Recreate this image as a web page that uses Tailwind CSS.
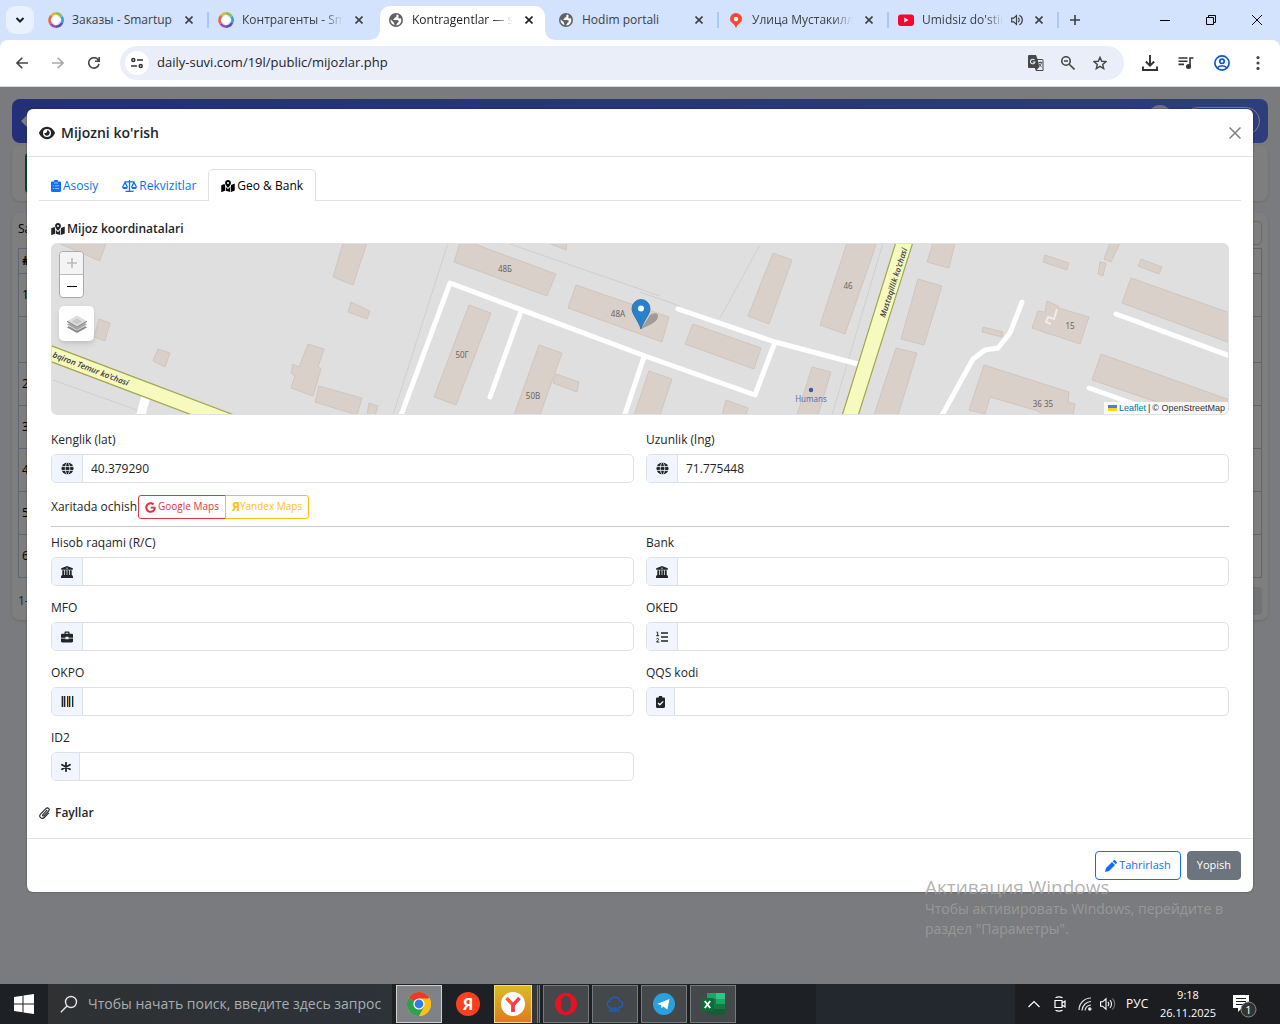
<!DOCTYPE html>
<html lang="uz">
<head>
    <meta charset="UTF-8">
    <meta name="viewport" content="width=device-width, initial-scale=1.0" />
    <script src="https://cdn.jsdelivr.net/npm/@tailwindcss/browser@4"></script>
    <title>Kontragentlar</title>
</head>
<body class="min-h-screen flex flex-col font-['Open_Sans','Noto_Sans',sans-serif] text-xs text-[#212529] bg-[#d3e3fd]">

<!-- shared icons -->
<svg class="hidden">
    <symbol id="x" viewBox="0 0 8 8"><path d="M.5.5l7 7M7.5.5l-7 7" stroke="currentColor" stroke-width="1.6" fill="none"/></symbol>
    <symbol id="smartup" viewBox="0 0 16 16">
        <g fill="none" stroke-width="2.6">
            <path d="M3.2 3.8A6.6 6.6 0 0 1 8 1.4" stroke="#e9b23c"/>
            <path d="M8 1.4a6.6 6.6 0 0 1 5.6 3.2" stroke="#8cc152"/>
            <path d="M13.6 4.6a6.6 6.6 0 0 1 .4 6.2" stroke="#3a9ad9"/>
            <path d="M14 10.8a6.6 6.6 0 0 1-6 3.8" stroke="#5b4fb5"/>
            <path d="M8 14.6a6.6 6.6 0 0 1-5.4-3" stroke="#a54bb0"/>
            <path d="M2.6 11.6a6.6 6.6 0 0 1 .6-7.8" stroke="#e8663f"/>
        </g>
        <path d="M8 2.4l5.400 5.400L8 13.400 2.600 8z" fill="#fff"/>
    </symbol>
    <symbol id="earth" viewBox="0 0 16 16">
        <circle cx="8" cy="8" r="7" fill="#5f6368"/>
        <path d="M9.600 2.400C8.400 2.600 8 3.500 8.400 4.200c.3.600-.6 1-1.300 1.200-.8.300-.5 1.300-1.300 1.500-.7.200-.4 1-.1 1.200h3.600c1 0 1.600.8 1.400 1.600-.2.700-1.200.600-1.400 1.400-.2.900-.7 1.700-1.700 2.100 3.400.600 5.700-2.200 5.700-5 0-.9-.2-1.600-.5-2.200-.7.700-1.700.700-2.200.1-.6-.7.1-1.700 0-2.400-.1-.6-.5-1.100-1-1.300z" fill="#fff"/>
        <path d="M2.500 7.600l3 2.400c.5.400.2 1 .6 1.500.4.400.600 1 .3 1.600C4 12.500 2.200 10.200 2.500 7.600z" fill="#fff"/>
    </symbol>
    <symbol id="map-pin" viewBox="0 0 576 512">
        <path fill="currentColor" d="M288 0c-70 0-126 56-126 126 0 56 82 158 113 194 7 8 19 8 26 0 31-36 113-138 113-194C414 56 358 0 288 0zm0 168a42 42 0 1 1 0-84 42 42 0 0 1 0 84zM20 216A32 32 0 0 0 0 246v250c0 11 11 19 22 15l138-57V214c-9-16-16-32-21-47L20 216zm268 160c-14 0-27-6-36-17-20-23-41-50-60-77v172l192 58V282c-19 27-40 54-60 77-9 11-22 17-36 17zm266-215l-138 57v294l140-56a32 32 0 0 0 20-30V176c0-11-11-19-22-15z"/>
    </symbol>
    <symbol id="globe" viewBox="0 0 14 14">
        <circle cx="7" cy="7" r="6.500" fill="currentColor"/>
        <g fill="none" stroke="#f1f5ff" stroke-width=".9"><path d="M0 4.900h14M0 9.100h14M7 0C3.800 3.500 3.800 10.500 7 14M7 0c3.200 3.500 3.200 10.500 0 14"/></g>
    </symbol>
    <symbol id="bank" viewBox="0 0 512 512">
        <path fill="currentColor" d="M256 0l248 100v60H8v-60zM56 180h80v200h32V180h72v200h32V180h72v200h32V180h80v200l48 40v24H8v-24l48-40zM0 450h512v62H0z"/>
        <circle cx="256" cy="92" r="30" fill="#f1f5ff"/>
    </symbol>
</svg>

<!-- tab strip -->
<header class="h-10 flex items-center pl-1.5 text-[#3c4043]">
    <button aria-label="Tabs" class="size-7 mr-1.5 rounded-[9px] bg-[#e9f0fe] flex items-center justify-center">
        <svg class="w-2.5 h-2" viewBox="0 0 10 8" fill="none" stroke="#1f1f1f" stroke-width="2"><path d="M1.500 2L5 5.500 8.500 2"/></svg>
    </button>
    <div class="w-[170px] flex items-center gap-2 pl-2 pr-px">
        <svg class="size-4 shrink-0"><use href="#smartup"/></svg>
        <span class="flex-1 overflow-hidden whitespace-nowrap">Заказы - Smartup</span>
        <button aria-label="Close" class="p-1 mr-0.5"><svg class="size-2"><use href="#x"/></svg></button>
        <i class="w-0.5 h-4 bg-[#a8c7fa]"></i>
    </div>
    <div class="w-[170px] flex items-center gap-2 pl-2 pr-px">
        <svg class="size-4 shrink-0"><use href="#smartup"/></svg>
        <span class="flex-1 overflow-hidden whitespace-nowrap [mask-image:linear-gradient(to_right,black_80%,transparent)]">Контрагенты - Smartup</span>
        <button aria-label="Close" class="p-1 mr-0.5"><svg class="size-2"><use href="#x"/></svg></button>
        <i class="w-0.5 h-4"></i>
    </div>
    <div class="w-[170px] h-full pt-1.5">
        <div class="relative w-[165px] h-full flex items-center gap-2 pl-2 pr-2 pb-1.5 bg-white rounded-t-[10px] text-[#1f1f1f]">
            <svg class="absolute -left-2.5 bottom-0 size-2.5" viewBox="0 0 10 10"><path d="M10 0v10H0A10 10 0 0 0 10 0z" fill="#fff"/></svg>
            <svg class="absolute -right-2.5 bottom-0 size-2.5" viewBox="0 0 10 10"><path d="M0 0v10h10A10 10 0 0 1 0 0z" fill="#fff"/></svg>
            <svg class="size-4 shrink-0"><use href="#earth"/></svg>
            <span class="flex-1 overflow-hidden whitespace-nowrap [mask-image:linear-gradient(to_right,black_80%,transparent)]">Kontragentlar — stol</span>
            <button aria-label="Close" class="p-1"><svg class="size-2"><use href="#x"/></svg></button>
        </div>
    </div>
    <div class="w-[170px] flex items-center gap-2 pl-2 pr-px">
        <svg class="size-4 shrink-0"><use href="#earth"/></svg>
        <span class="flex-1 overflow-hidden whitespace-nowrap">Hodim portali</span>
        <button aria-label="Close" class="p-1 mr-0.5"><svg class="size-2"><use href="#x"/></svg></button>
        <i class="w-0.5 h-4 bg-[#a8c7fa]"></i>
    </div>
    <div class="w-[170px] flex items-center gap-2 pl-2 pr-px">
        <svg class="size-4 shrink-0" viewBox="0 0 16 16"><path d="M8 1a6 6 0 0 0-6 6c0 4 4.800 4.300 5.500 8.500h1C9.200 11.300 14 11 14 7a6 6 0 0 0-6-6z" fill="#f43"/><circle cx="8" cy="7" r="2.200" fill="#fff"/></svg>
        <span class="flex-1 overflow-hidden whitespace-nowrap [mask-image:linear-gradient(to_right,black_80%,transparent)]">Улица Мустакиллик</span>
        <button aria-label="Close" class="p-1 mr-0.5"><svg class="size-2"><use href="#x"/></svg></button>
        <i class="w-0.5 h-4 bg-[#a8c7fa]"></i>
    </div>
    <div class="w-[170px] flex items-center gap-2 pl-2 pr-px">
        <svg class="size-4 shrink-0" viewBox="0 0 16 16"><rect y="2.500" width="16" height="11.500" rx="3" fill="#f03"/><path d="M6.200 5.600v5L10.600 8z" fill="#fff"/></svg>
        <span class="flex-1 overflow-hidden whitespace-nowrap [mask-image:linear-gradient(to_right,black_80%,transparent)]">Umidsiz do'stim</span>
        <svg class="w-3 h-3 shrink-0" viewBox="0 0 12 12" fill="none" stroke="#3c4043" stroke-width="1.200"><path d="M.7 4.200h2L5.500 1.600v8.800L2.700 7.800h-2zM7.300 3.800c1.200 1 1.200 3.400 0 4.400M8.300 1.200c4 1.800 4 7.800 0 9.600"/></svg>
        <button aria-label="Close" class="p-1 mr-0.5"><svg class="size-2"><use href="#x"/></svg></button>
        <i class="w-0.5 h-4 bg-[#a8c7fa]"></i>
    </div>
    <button aria-label="New tab" class="p-2.5"><svg class="size-2.5" viewBox="0 0 10 10" stroke="#3c4043" stroke-width="1.600"><path d="M5 0v10M0 5h10"/></svg></button>
    <div class="ml-auto flex text-black">
        <button aria-label="Minimize" class="w-[46px] h-10 flex items-center justify-center"><svg class="size-2.5" viewBox="0 0 10 10"><path d="M0 5h10v1H0z"/></svg></button>
        <button aria-label="Restore" class="w-[46px] h-10 flex items-center justify-center"><svg class="size-2.5" viewBox="0 0 10 10" fill="none" stroke="#000"><path d="M.5 2.500h7v7h-7zM2.500 2.500v-2h7v7h-2"/></svg></button>
        <button aria-label="Close window" class="w-[46px] h-10 flex items-center justify-center"><svg class="size-2.5" viewBox="0 0 10 10" stroke="#000"><path d="M0 0l10 10M10 0L0 10"/></svg></button>
    </div>
</header>

<!-- toolbar -->
<nav class="h-[47px] flex items-center px-1 bg-white rounded-t-lg border-b border-[#d5d7db] text-[#474747]">
    <button aria-label="Back" class="w-9 flex justify-center"><svg class="size-3" viewBox="0 0 12 12" fill="none" stroke="currentColor" stroke-width="1.600"><path d="M12 6H1M6.300.7L1 6l5.300 5.300"/></svg></button>
    <button aria-label="Forward" class="w-9 flex justify-center text-[#a8a8a8]"><svg class="size-3" viewBox="0 0 12 12" fill="none" stroke="currentColor" stroke-width="1.600"><path d="M0 6h11M5.700.7L11 6l-5.300 5.300"/></svg></button>
    <button aria-label="Reload" class="w-9 flex justify-center"><svg class="size-3" viewBox="0 0 12 12" fill="none" stroke="currentColor" stroke-width="1.600"><path d="M11 7A5.200 5.200 0 1 1 9.700 2.300L11 4M11.200 0v4.300H7"/></svg></button>
    <div class="flex-1 h-[34px] ml-2 mr-2 pl-[5px] pr-2 flex items-center rounded-full bg-[#e9eef9]">
        <span class="size-6 mr-2 rounded-full bg-white flex items-center justify-center">
            <svg class="size-3" viewBox="0 0 12 12" fill="none" stroke="#333" stroke-width="1.500"><circle cx="2.300" cy="3" r="1.500"/><path d="M6 3h6M0 9h6"/><circle cx="9.700" cy="9" r="1.500"/></svg>
        </span>
        <input aria-label="Address" class="flex-1 text-[13px] text-[#1f1f1f] outline-none" value="daily-suvi.com/19l/public/mijozlar.php">
        <button aria-label="Translate" class="w-8 flex justify-center">
            <svg class="size-4" viewBox="0 0 16 16"><path d="M1 0h7l1.500 4H14a1.500 1.500 0 0 1 1.500 1.500V15a1 1 0 0 1-1 1H8l-1.200-3H1a1 1 0 0 1-1-1V1a1 1 0 0 1 1-1z" fill="#474747"/><path d="M9.800 5h4.700v10H8.800l2.400-3z" fill="#e9eef9"/><path d="M6.500 5A2.300 2.300 0 1 0 7 7H4.800" fill="none" stroke="#e9eef9" stroke-width="1.100"/><path d="M10.300 7.500h4M12.300 6.500v1M13.500 7.500c-.5 2-1.500 3.500-3 4.500M11 8.500c.5 1.500 1.500 2.700 2.800 3.500" fill="none" stroke="#474747" stroke-width=".9"/></svg>
        </button>
        <button aria-label="Zoom" class="w-8 flex justify-center"><svg class="size-3.5" viewBox="0 0 14 14" fill="none" stroke="#474747" stroke-width="1.600"><circle cx="5" cy="5" r="4.200"/><path d="M8.200 8.200l5.300 5.300M3 5h4"/></svg></button>
        <button aria-label="Bookmark" class="w-8 flex justify-center"><svg class="size-3.5" viewBox="0 0 14 14" fill="none" stroke="#474747" stroke-width="1.400"><path d="M7 1.300l1.700 4 4.300.3-3.300 2.800 1 4.200L7 10.300l-3.700 2.300 1-4.200L1 5.600l4.300-.3z"/></svg></button>
    </div>
    <button aria-label="Downloads" class="w-9 flex justify-center"><svg class="size-4" viewBox="0 0 16 16" fill="none" stroke="#333" stroke-width="1.900"><path d="M8 0v10.500M3.800 6.500L8 10.700l4.200-4.200M1 11.500V15h14v-3.500"/></svg></button>
    <button aria-label="Media" class="w-9 flex justify-center"><svg class="size-4" viewBox="0 0 16 16" fill="none" stroke="#333" stroke-width="1.600"><path d="M.5 3h9M.5 6.200h9M.5 9.400h5.500M12 11.500V3h3.500"/><circle cx="10.500" cy="11.500" r="1.700" fill="#333"/></svg></button>
    <button aria-label="Profile" class="w-9 flex justify-center"><svg class="size-4" viewBox="0 0 16 16" fill="none" stroke="#0b57d0" stroke-width="1.700"><circle cx="8" cy="8" r="7.100"/><circle cx="8" cy="6.300" r="2.200"/><path d="M3 13c2.500-3 7.500-3 10 0"/></svg></button>
    <button aria-label="Menu" class="w-9 flex justify-center"><svg class="w-1 h-3.5" viewBox="0 0 4 14" fill="#474747"><circle cx="2" cy="1.600" r="1.600"/><circle cx="2" cy="7" r="1.600"/><circle cx="2" cy="12.400" r="1.600"/></svg></button>
</nav>

<main class="relative flex-1 bg-[#f5f6fc]">
    <!-- page under the modal -->
    <div class="p-3">
        <div class="h-11 mb-0.5 px-2 flex items-center rounded-lg bg-linear-to-r from-[#4660f0] to-[#5c7af8]">
            <svg class="size-4" viewBox="0 0 16 16" fill="#fff"><path d="M8 1v4h7v6H8v4L1 8z"/></svg>
            <span class="w-6 h-8 ml-auto rounded-full bg-white/80"></span>
            <span class="w-[76px] h-7 ml-3 rounded-full border border-white"></span>
        </div>
        <div class="h-14 mb-3 p-2 pl-[13px] rounded-lg bg-white/70 shadow-sm"><div class="w-20 h-10 rounded-sm bg-[#198754]"></div></div>
        <div class="p-1.5 pt-2 rounded-lg bg-white/70 shadow-sm text-black">
            <div class="h-[27px] flex items-start justify-between">Saralash<span class="w-40 h-6 border border-gray-300 rounded-sm"></span></div>
            <table class="w-full border border-[#bccbe8]">
                <tr class="h-[25px] border-b border-[#bccbe8]"><th class="px-[3px] text-left">#</th></tr>
                <tr class="h-[43px] border-b border-[#bccbe8]"><td class="px-[3px]">1</td></tr>
                <tr class="h-[46px] border-b border-[#bccbe8]"><td></td></tr>
                <tr class="h-[43px] border-b border-[#bccbe8]"><td class="px-[3px]">2</td></tr>
                <tr class="h-[43px] border-b border-[#bccbe8]"><td class="px-[3px]">3</td></tr>
                <tr class="h-[43px] border-b border-[#bccbe8]"><td class="px-[3px]">4</td></tr>
                <tr class="h-[43px] border-b border-[#bccbe8]"><td class="px-[3px]">5</td></tr>
                <tr class="h-[43px] border-b border-[#bccbe8]"><td class="px-[3px]">6</td></tr>
            </table>
            <div class="pt-2.5 h-9 flex items-center justify-between"><span class="text-[#2a4a9a]">1-6</span><span class="w-10 h-7 bg-gray-200 rounded-sm"></span></div>
        </div>
    </div>

    <!-- modal -->
    <div class="absolute inset-0 bg-black/50 px-[27px] pt-[22px]">
        <div role="dialog" aria-labelledby="title" class="bg-white rounded-md shadow-[0_0_2px_#0006]">
            <div class="h-12 px-3 flex items-center gap-1.5 border-b border-[#dee2e6]">
                <svg class="w-4 h-4" viewBox="0 0 576 512" fill="currentColor"><path d="M288 32c-80.800 0-145.500 36.800-192.600 80.600C48.600 156 17.300 208 2.500 243.700c-3.300 7.900-3.300 16.700 0 24.600C17.300 304 48.600 356 95.400 399.400C142.500 443.200 207.200 480 288 480s145.500-36.800 192.600-80.600c46.800-43.500 78.100-95.400 93-131.100c3.300-7.900 3.300-16.700 0-24.600c-14.900-35.700-46.200-87.700-93-131.100C433.500 68.800 368.800 32 288 32zM144 256a144 144 0 1 1 288 0 144 144 0 1 1 -288 0zm144-64c0 35.300-28.700 64-64 64c-7.100 0-13.900-1.200-20.300-3.300c-5.500-1.800-11.900 1.600-11.700 7.400c.3 6.900 1.300 13.800 3.200 20.700c13.700 51.200 66.400 81.600 117.600 67.900s81.600-66.400 67.900-117.600c-11.100-41.500-47.800-69.400-88.600-71.100c-5.800-.2-9.200 6.100-7.400 11.700c2.100 6.400 3.300 13.200 3.300 20.300z"/></svg>
                <h5 id="title" class="text-sm font-semibold">Mijozni ko'rish</h5>
                <button aria-label="Close" class="ml-auto text-[#7f7f7f]"><svg class="size-3" viewBox="0 0 12 12" stroke="currentColor" stroke-width="1.500"><path d="M.5.5l11 11M11.500.5l-11 11"/></svg></button>
            </div>

            <div class="px-3 pt-3 pb-[15px]">
                <div role="tablist" class="flex h-8 border-b border-[#dee2e6] text-[#0d6efd]">
                    <button role="tab" class="h-8 px-3 pt-px flex items-center gap-0.5">
                        <svg class="w-2.5 h-3" viewBox="0 0 10 12"><path d="M1.200 1.400H3a2 2 0 0 1 4 0h1.800c.7 0 1.200.5 1.200 1.200v8.200c0 .7-.5 1.200-1.200 1.200H1.200C.5 12 0 11.500 0 10.800V2.600c0-.7.5-1.200 1.200-1.200z" fill="currentColor"/><path d="M3 3h4M3.800 5.800h4.400M3.800 8.600h4.400M1.800 5.800h1M1.800 8.600h1" stroke="#fff" stroke-width=".6"/></svg>
                        Asosiy
                    </button>
                    <button role="tab" class="h-8 px-3 pt-px flex items-center gap-0.5">
                        <svg class="w-[15px] h-3" viewBox="0 0 15 12" fill="none" stroke="currentColor" stroke-width="1.300"><path d="M2.500 1.900h10M7.500 0v11M3.500 11.300h8M.6 7L3 2.500 5.400 7M9.600 7L12 2.500 14.400 7"/><path d="M.2 7h5.600a2.800 2 0 0 1-5.600 0zM9.200 7h5.600a2.800 2 0 0 1-5.600 0z" fill="currentColor" stroke="none"/></svg>
                        Rekvizitlar
                    </button>
                    <button role="tab" aria-selected="true" class="h-8 px-3 flex items-center gap-0.5 text-black bg-white border border-b-0 border-[#dee2e6] rounded-t-[5px]">
                        <svg class="w-3.5 h-3"><use href="#map-pin"/></svg>
                        Geo &amp; Bank
                    </button>
                </div>

                <div class="px-3 pt-[18px]">
                    <h6 class="flex items-center gap-0.5 leading-5 font-semibold mb-1"><svg class="w-3.5 h-3"><use href="#map-pin"/></svg>Mijoz koordinatalari</h6>

                    <!-- map -->
                    <div class="relative h-[172px] mb-[15px] border border-[#dee2e6] rounded-md overflow-hidden bg-[#dfdfdf]">
                        <svg class="w-full h-full" viewBox="52 244 1176 170" preserveAspectRatio="xMidYMid slice">
                            <g fill="none" stroke="#cfcfcf">
                                <path d="M448 243L393 415M507 243l153 53M760 245l-40 73M883 243l-51 172M640 292l40 14M53 380l84 30"/>
                            </g>
                            <g fill="#d9d0c9" stroke="#cfc0b5" stroke-width=".8">
                                <path d="M58 243h48l-6 18zM99 319l11 4-5 18-11-4zM158 349l12 4-5 14-12-6z"/>
                                <path d="M308 344l16 5-6 18 3 2-8 27-22-8 4-12-4-3 2-9 6 3zM319 386l43 12-5 17-42-13zM369 403l9 3-3 9h-8z"/>
                                <path d="M343 243h24l-14 42-20-8zM351 302l19 9-3 8-19-7z"/>
                                <path d="M460 243h12l84 31-9 22-93-34zM548 243h19l-1 7zM576 285l93 32-7 25-94-34z"/>
                                <path d="M469 305l22 8-35 92-22-8zM539 345l23 8-22 62h-26zM556 374l23 8-2 10-24-9z"/>
                                <path d="M773 253l19 7-23 64-21-8zM847 243h25l4 2-31 89-25-9zM933 243h22l-6 25-22-6zM918 279l24 7-18 59-23-6zM896 348l21 5-19 62h-24z"/>
                                <path d="M693 324l68 24-7 21-69-25zM649 371l23 8-12 36h-26zM726 400l22 8-2 7h-24zM812 367l19 5-13 43h-21z"/>
                                <path d="M1045 255l24 8-2 7-24-8zM1110 243h10l-9 19-7-3zM1100 262l6 1-3 13-5-2zM1141 259l21 8-3 7-21-8z"/>
                                <path d="M1131 278l99 35v30l-108-40zM1101 354l129 46v20h-20l-118-40zM983 327l20 5-1 5-20-5z"/>
                                <path d="M1059 308l30 9-9 27-27-9-4-1-17-6 6-17 7 1 2-11 11 5z"/>
                                <path d="M984 365l85 27-1 10 7 2-2 11h-31l-4-4-48-14-5 17-16-4z"/>
                            </g>
                            <path d="M1057 309l-3 10-6-2-2 5 5 2" fill="none" stroke="#ececec" stroke-width="2"/>
                            <g fill="none" stroke="#fff" stroke-width="5" stroke-linecap="round" stroke-linejoin="round">
                                <path d="M400 418L450 283l195 73 110 39 20-53M521 311l-31 86M644 357l-20 60M678 309l97 33 83 22"/>
                                <path d="M1022 302l-12 31-12 15-13 2-12 9-32 58M1116 314l114 42M1089 388l45 16"/>
                                <path d="M146 396l-6 22" stroke-width="9" stroke-linecap="butt"/>
                            </g>
                            <g fill="#f7fabf" stroke="#a3a650" stroke-width="1.200">
                                <path d="M48 344.500l190 72h-42L48 360.500z"/>
                                <path d="M896 242h17l-55 174h-16z"/>
                            </g>
                            <g class="font-['Noto_Sans']" font-size="8" fill="#666" text-anchor="middle">
                                <text x="505" y="272">48Б</text><text x="618" y="317">48А</text><text x="462" y="358">50Г</text>
                                <text x="533" y="399">50В</text><text x="848" y="289">46</text><text x="1070" y="329">15</text><text x="1043" y="407">36 35</text>
                                <text x="811" y="402" fill="#5a74b0">Humans</text>
                            </g>
                            <g class="font-['Noto_Sans']" font-size="8" font-weight="600" font-style="italic" fill="#444">
                                <text transform="translate(52 357) rotate(21)">bqiron Temur ko'chasi</text>
                                <text transform="translate(885 318) rotate(-72)">Mustaqillik ko'chasi</text>
                            </g>
                            <circle cx="811" cy="390" r="2.200" fill="#3558a8"/>
                            <!-- marker -->
                            <path d="M641 329l9-14c4-3 9-2 8 2-1 5-8 8-17 12z" fill="#000" opacity=".25"/>
                            <path d="M641 299.500a9 9 0 0 0-9 9c0 6 6 11 9 20.500 3-9.500 9-14.500 9-20.500a9 9 0 0 0-9-9z" fill="#2a81cb" stroke="#2569a5" stroke-width=".8"/>
                            <circle cx="641" cy="308.500" r="3" fill="#fff"/>
                        </svg>
                        <div class="absolute left-[7px] top-[7px] w-[25px] flex flex-col border border-[#aaa] rounded-sm bg-white text-black">
                            <button aria-label="Zoom in" disabled class="h-[23px] flex items-center justify-center bg-[#f4f4f4] border-b border-[#bbb] rounded-t-sm"><svg class="size-2.5" viewBox="0 0 10 10" stroke="#bbb" stroke-width="1.600"><path d="M5 0v10M0 5h10"/></svg></button>
                            <button aria-label="Zoom out" class="h-[22px] flex items-center justify-center"><svg class="size-2.5" viewBox="0 0 10 10" stroke="#000" stroke-width="1.200"><path d="M0 5.500h10"/></svg></button>
                        </div>
                        <button aria-label="Layers" class="absolute left-[7px] top-[62px] size-[35px] flex items-center justify-center bg-white rounded-[5px] shadow-md">
                            <svg class="size-5" viewBox="0 0 20 20"><path d="M0 13.500l10 5.500 10-5.500-2-1.200-8 4.200-8-4.200z" fill="#8c8c8c"/><path d="M0 10.500L10 16l10-5.500-2-1.200-8 4.200-8-4.200z" fill="#a5a5a5"/><path d="M10 1.500L0 7.300 10 13l10-5.700z" fill="#dedede"/><path d="M0 7.300L10 13l10-5.700" fill="none" stroke="#8c8c8c" stroke-width="1.200"/><path d="M10 4.500L5 7.400l5 2.900 5-2.900z" fill="#c8c8c8"/></svg>
                        </button>
                        <div class="absolute right-0 bottom-0 h-3 pl-1 pr-[3px] flex items-center gap-0.5 bg-white/80 font-['Liberation_Sans'] text-[9px] text-[#333]">
                            <svg class="w-[9px] h-1.5" viewBox="0 0 9 6"><path fill="#4c7be1" d="M0 0h9v3H0z"/><path fill="#ffd500" d="M0 3h9v3H0z"/></svg>
                            <a href="#" class="text-[#0078a8]">Leaflet</a><span>|</span><span>© OpenStreetMap</span>
                        </div>
                    </div>

                    <div class="grid grid-cols-2 gap-3">
                        <div>
                            <label for="lat" class="block leading-5 mb-1">Kenglik (lat)</label>
                            <div class="flex h-[29px] border border-[#dee2e6] rounded-[5px] overflow-hidden">
                                <span class="w-[31px] flex items-center justify-center bg-[#f1f5ff] border-r border-[#dee2e6]"><svg class="size-[13px]"><use href="#globe"/></svg></span>
                                <input id="lat" value="40.379290" class="flex-1 px-2 outline-none">
                            </div>
                        </div>
                        <div>
                            <label for="lng" class="block leading-5 mb-1">Uzunlik (lng)</label>
                            <div class="flex h-[29px] border border-[#dee2e6] rounded-[5px] overflow-hidden">
                                <span class="w-[31px] flex items-center justify-center bg-[#f1f5ff] border-r border-[#dee2e6]"><svg class="size-[13px]"><use href="#globe"/></svg></span>
                                <input id="lng" value="71.775448" class="flex-1 px-2 outline-none">
                            </div>
                        </div>
                    </div>

                    <div class="flex items-center mt-3">
                        <span class="mr-px">Xaritada ochish</span>
                        <a href="#" class="h-6 px-1.5 flex items-center gap-0.5 text-[10px] text-[#dc3545] border border-[#dc3545] rounded-l-[3px]">
                            <svg class="size-[11px]" viewBox="0 0 488 512" fill="currentColor"><path d="M488 261.800C488 403.300 391.100 504 248 504 110.800 504 0 393.200 0 256S110.800 8 248 8c66.800 0 123 24.500 166.300 64.900l-67.500 64.900C258.500 52.600 94.300 116.600 94.300 256c0 86.500 69.100 156.600 153.700 156.600 98.200 0 135-70.400 140.800-106.900H248v-85.300h236.100c2.300 12.700 3.900 24.900 3.900 41.400z"/></svg>
                            Google Maps
                        </a>
                        <a href="#" class="h-6 px-1.5 -ml-px flex items-center text-[10px] text-[#ffc107] border border-[#ffc107] rounded-r-[3px]"><b class="text-xs">Я</b>Yandex Maps</a>
                    </div>
                    <hr class="mt-[7px] mb-1.5 border-[#c8c9ca]">

                    <div class="grid grid-cols-2 gap-3">
                        <div>
                            <label for="rc" class="block leading-5 mb-1">Hisob raqami (R/C)</label>
                            <div class="flex h-[29px] border border-[#dee2e6] rounded-[5px] overflow-hidden">
                                <span class="w-[31px] flex items-center justify-center bg-[#f1f5ff] border-r border-[#dee2e6]"><svg class="size-3"><use href="#bank"/></svg></span>
                                <input id="rc" class="flex-1 px-2 outline-none">
                            </div>
                        </div>
                        <div>
                            <label for="bankname" class="block leading-5 mb-1">Bank</label>
                            <div class="flex h-[29px] border border-[#dee2e6] rounded-[5px] overflow-hidden">
                                <span class="w-[31px] flex items-center justify-center bg-[#f1f5ff] border-r border-[#dee2e6]"><svg class="size-3"><use href="#bank"/></svg></span>
                                <input id="bankname" class="flex-1 px-2 outline-none">
                            </div>
                        </div>
                        <div>
                            <label for="mfo" class="block leading-5 mb-1">MFO</label>
                            <div class="flex h-[29px] border border-[#dee2e6] rounded-[5px] overflow-hidden">
                                <span class="w-[31px] flex items-center justify-center bg-[#f1f5ff] border-r border-[#dee2e6]">
                                    <svg class="size-3" viewBox="0 0 12 12" fill="currentColor"><path d="M3.500 2.800V1.500c0-.6.4-1 1-1h3c.6 0 1 .4 1 1v1.300h2.300c.7 0 1.200.5 1.200 1.200v2.700H7.500v-.9h-3v.9H0V4c0-.7.5-1.200 1.200-1.200zm1.200 0h2.600V1.700H4.700zM0 7.400h4.500v.8h3v-.8H12v2.900c0 .7-.5 1.200-1.200 1.200H1.200C.5 11.500 0 11 0 10.300z"/></svg>
                                </span>
                                <input id="mfo" class="flex-1 px-2 outline-none">
                            </div>
                        </div>
                        <div>
                            <label for="oked" class="block leading-5 mb-1">OKED</label>
                            <div class="flex h-[29px] border border-[#dee2e6] rounded-[5px] overflow-hidden">
                                <span class="w-[31px] flex items-center justify-center bg-[#f1f5ff] border-r border-[#dee2e6]">
                                    <svg class="size-3" viewBox="0 0 12 12" fill="none" stroke="currentColor"><path d="M5 2h7M5 6h7M5 10h7" stroke-width="1.500"/><path d="M.5 1.200h1.200v3.600M.2 4.700h3M.4 8c.8-1 2.300-.6 2.200.4 0 .8-1.500 1.600-2.200 2.600h3"/></svg>
                                </span>
                                <input id="oked" class="flex-1 px-2 outline-none">
                            </div>
                        </div>
                        <div>
                            <label for="okpo" class="block leading-5 mb-1">OKPO</label>
                            <div class="flex h-[29px] border border-[#dee2e6] rounded-[5px] overflow-hidden">
                                <span class="w-[31px] flex items-center justify-center bg-[#f1f5ff] border-r border-[#dee2e6]">
                                    <svg class="w-[13px] h-[11px]" viewBox="0 0 13 11"><path d="M1 0h1v11H1zM3 0h1v11H3zM6 0h1v11H6zM8 0h1v11H8zM11 0h1v11h-1z" fill="#212529"/><path d="M0 0h1v11H0zM4 0h1v11H4zM7 0h1v11H7z" fill="#e39a55"/><path d="M2 0h1v11H2zM9 0h1v11H9zM12 0h1v11h-1z" fill="#6cc3d6"/></svg>
                                </span>
                                <input id="okpo" class="flex-1 px-2 outline-none">
                            </div>
                        </div>
                        <div>
                            <label for="qqs" class="block leading-5 mb-1">QQS kodi</label>
                            <div class="flex h-[29px] border border-[#dee2e6] rounded-[5px] overflow-hidden">
                                <span class="w-7 flex items-center justify-center bg-[#f1f5ff] border-r border-[#dee2e6]">
                                    <svg class="w-[9px] h-3" viewBox="0 0 9 12"><path d="M1.200 1.400h1.500a1.800 1.800 0 0 1 3.600 0h1.500c.7 0 1.200.5 1.200 1.200v8.200c0 .7-.5 1.200-1.200 1.200H1.200C.5 12 0 11.500 0 10.800V2.600c0-.7.5-1.200 1.200-1.200z" fill="currentColor"/><path d="M2 7l1.800 1.800L7.200 5.400" fill="none" stroke="#fff" stroke-width="1.300"/></svg>
                                </span>
                                <input id="qqs" class="flex-1 px-2 outline-none">
                            </div>
                        </div>
                        <div>
                            <label for="id2" class="block leading-5 mb-1">ID2</label>
                            <div class="flex h-[29px] border border-[#dee2e6] rounded-[5px] overflow-hidden">
                                <span class="w-7 flex items-center justify-center bg-[#f1f5ff] border-r border-[#dee2e6]">
                                    <svg class="size-2.5" viewBox="0 0 10 10" stroke="currentColor" stroke-width="1.800" stroke-linecap="round"><path d="M5 .8v8.400M1 2.700l8 4.600M9 2.700L1 7.300"/></svg>
                                </span>
                                <input id="id2" class="flex-1 px-2 outline-none">
                            </div>
                        </div>
                    </div>
                </div>

                <h6 class="mt-[22px] leading-5 font-semibold flex items-center gap-[5px]">
                    <svg class="w-[11px] h-3" viewBox="0 0 11 12" fill="none" stroke="currentColor" stroke-width="1.100" stroke-linecap="round"><path d="M7.800 3.400L3.900 7.500c-.8.900.4 2 1.200 1.200l4.400-4.600c1.900-2-.7-4.500-2.600-2.500L1.700 6.900c-2.600 2.700 1.100 6.200 3.600 3.600L9.500 6.200"/></svg>
                    Fayllar
                </h6>
            </div>

            <div class="p-3 flex justify-end gap-1.5 border-t border-[#dee2e6] text-[11px]">
                <button class="h-[29px] px-[9px] flex items-center gap-0.5 text-[#0d6efd] border border-[#0d6efd] rounded-[4px]">
                    <svg class="size-3" viewBox="0 0 12 12" fill="currentColor"><path d="M7 2l3 3-6 6-4 1 1-4zM7.700 1.300l1-1c.4-.4 1-.4 1.400 0l1.600 1.600c.4.400.4 1 0 1.400l-1 1z"/></svg>
                    Tahrirlash
                </button>
                <button class="h-[29px] px-[9px] font-medium text-white bg-[#6c757d] border border-[#6c757d] rounded-[4px]">Yopish</button>
            </div>
        </div>
    </div>

    <!-- activation watermark -->
    <div class="absolute right-[44px] bottom-[45px] w-[311px] text-[#a0a0a0]/80">
        <p class="text-[19px] leading-6">Активация Windows</p>
        <p class="text-sm leading-5">Чтобы активировать Windows, перейдите в раздел "Параметры".</p>
    </div>
</main>

<!-- taskbar -->
<footer class="h-10 flex items-center bg-[#1d2125] text-white">
    <button aria-label="Start" class="w-12 flex justify-center"><svg class="size-5" viewBox="0 0 20 20" fill="#fff"><path d="M0 3l8.500-1.200v7.700H0zM9.500 1.600L20 0v9.500H9.500zM0 10.500h8.500v7.700L0 17zM9.500 10.500H20V20L9.500 18.400z"/></svg></button>
    <div class="w-[344px] h-full mr-1 pl-3 flex items-center gap-2.5 bg-linear-to-r from-[#2f3133] to-[#2c3339]">
        <svg class="w-[18px] h-[18px] shrink-0" viewBox="0 0 18 18" fill="none" stroke="#e5e5e5" stroke-width="1.400"><circle cx="11" cy="7" r="5.500"/><path d="M7 11L.8 17.200"/></svg>
        <input aria-label="Search" class="flex-1 min-w-0 text-sm outline-none placeholder:text-[#a9adb0]" placeholder="Чтобы начать поиск, введите здесь запрос">
    </div>
    <button aria-label="Chrome" class="w-[46px] h-[38px] flex items-center justify-center bg-[#808285] border border-[#d0d0d0]">
        <svg class="size-6" viewBox="0 0 24 24"><circle cx="12" cy="12" r="12" fill="#fbc116"/><path d="M12 12L1.600 6A12 12 0 0 1 22.400 6z" fill="#e33b2e"/><path d="M1.600 6A12 12 0 0 0 12 24l5.200-9L12 12z" fill="#2ba24c"/><path d="M12 6.500h10.700A12 12 0 0 1 12 24l5-9z" fill="#fbc116"/><circle cx="12" cy="12" r="5.600" fill="#fff"/><circle cx="12" cy="12" r="4.400" fill="#2f7de9"/></svg>
    </button>
    <button aria-label="Yandex" class="w-[52px] flex justify-center"><span class="size-6 rounded-full bg-[#fc3f1d] text-base leading-6 font-bold text-center">Я</span></button>
    <button aria-label="Yandex Browser" class="w-[38px] h-[38px] flex items-center justify-center bg-linear-to-b from-[#d9bb26] to-[#dd7a1e] border border-[#f0dc80]">
        <svg class="size-6" viewBox="0 0 24 24"><circle cx="12" cy="12" r="12" fill="#fff"/><path d="M5.500 6l6.500 7v7" fill="none" stroke="#fc5a2c" stroke-width="3.400"/><path d="M18.500 6L12 13v7" fill="none" stroke="#f43a52" stroke-width="3.400"/></svg>
    </button>
    <span class="w-2 h-[38px] mr-[3px] flex justify-center border-r border-[#77797b] bg-[#33373a]"><i class="w-1 border-r border-[#77797b]"></i></span>
    <button aria-label="Opera" class="w-[46px] h-[38px] mr-[3px] flex items-center justify-center bg-[#45484b] border border-[#77797b]">
        <svg class="size-6" viewBox="0 0 24 24"><path fill-rule="evenodd" d="M12 1a11 11 0 1 0 0 22 11 11 0 0 0 0-22zm0 3c3 0 5 3.500 5 8s-2 8-5 8-5-3.500-5-8 2-8 5-8z" fill="#e81224"/></svg>
    </button>
    <button aria-label="Cloud" class="w-[46px] h-[38px] mr-[3px] flex items-center justify-center bg-[#45484b] border border-[#77797b]">
        <svg class="w-[18px] h-4" viewBox="0 0 18 16" fill="none" stroke="#1f5fb8" stroke-width="1.300"><path d="M4 11.500a3.300 3.300 0 0 1 0-6.500 5 5 0 0 1 9.700 0 3.300 3.300 0 0 1 .3 6.500h-2"/><path d="M4 15.200v-3h2v3zM8 15.200v-3h2v3zM12 12.200v3h2"/></svg>
    </button>
    <button aria-label="Telegram" class="w-[46px] h-[38px] mr-[3px] flex items-center justify-center bg-[#45484b] border border-[#77797b]">
        <svg class="size-[22px]" viewBox="0 0 22 22"><circle cx="11" cy="11" r="11" fill="#2aa1de"/><path d="M4 11l12.500-5-2.200 10.500-4-3-1.800 1.800-.4-3.300z" fill="#fff"/></svg>
    </button>
    <button aria-label="Excel" class="w-[46px] h-[38px] flex items-center justify-center bg-[#45484b] border border-[#77797b]">
        <svg class="size-6" viewBox="0 0 24 24"><path d="M6 1h9v6H6z" fill="#21a366"/><path d="M15 1h9v6h-9z" fill="#33c481"/><path d="M6 7h9v10H6z" fill="#107c41"/><path d="M15 7h9v5h-9z" fill="#21a366"/><path d="M15 12h9v5h-9z" fill="#107c41"/><path d="M6 17h18v6H6z" fill="#185c37"/><rect y="6" width="13" height="13" rx="1" fill="#0f6c38"/><path d="M3.800 9l5.400 7M9.200 9l-5.400 7" stroke="#fff" stroke-width="1.900"/></svg>
    </button>
    <div class="w-20"></div>
    <div class="flex-1 h-full bg-[#22282d]"></div>
    <div class="w-[265px] h-full pl-[13px] flex items-center bg-[#1b1d20]">
        <svg class="w-3 h-2 mr-3" viewBox="0 0 12 8" fill="none" stroke="#fff" stroke-width="1.200"><path d="M.5 7L6 1.500 11.500 7"/></svg>
        <svg class="w-4 h-4 mr-2.5" viewBox="0 0 16 16" fill="none" stroke="#fff" stroke-width="1.200"><path d="M3 4.500h7v7H3zM10 7l3-2v6l-3-2M3.500 1.800Q7 0 10.500 1.800M3.500 14.200Q7 16 10.500 14.200"/></svg>
        <svg class="w-3.5 h-3.5 mr-2" viewBox="0 0 14 14" fill="none" stroke="#ddd" stroke-width="1.200"><path d="M1 13A12 12 0 0 1 13 1M4 13.500A9.500 9.500 0 0 1 13 4.500M7 13.500A6.500 6.500 0 0 1 13 8"/><circle cx="11.800" cy="12" r="1.200" fill="#fff"/></svg>
        <svg class="w-4 h-3.5 mr-2.5" viewBox="0 0 16 14" fill="none" stroke="#fff" stroke-width="1.100"><path d="M.6 4.800h2L6 1.800v10.400L2.600 9.200h-2zM8 5c1 1 1 3 0 4M10 3.200c2 2 2 5.600 0 7.600"/><path d="M12.500 1.500c3 3 3 8 0 11" stroke="#777"/></svg>
        <span class="w-7">РУС</span>
        <div class="w-[68px] text-center text-[11px] leading-[18px]">9:18<br>26.11.2025</div>
        <button aria-label="Notifications" class="ml-[11px] mt-1">
            <svg class="w-6 h-6" viewBox="0 0 24 24"><path d="M0 1h16v13h-7l-4 4v-4H0z" fill="#fff"/><path d="M3 4.500h10M3 7.500h10M3 10.500h7" stroke="#1b1d20" stroke-width="1.200"/><circle cx="15.500" cy="15.500" r="7.500" fill="#333" stroke="#888"/><text x="15.500" y="19.500" font-size="11" fill="#fff" text-anchor="middle">1</text></svg>
        </button>
    </div>
</footer>
</body>
</html>
